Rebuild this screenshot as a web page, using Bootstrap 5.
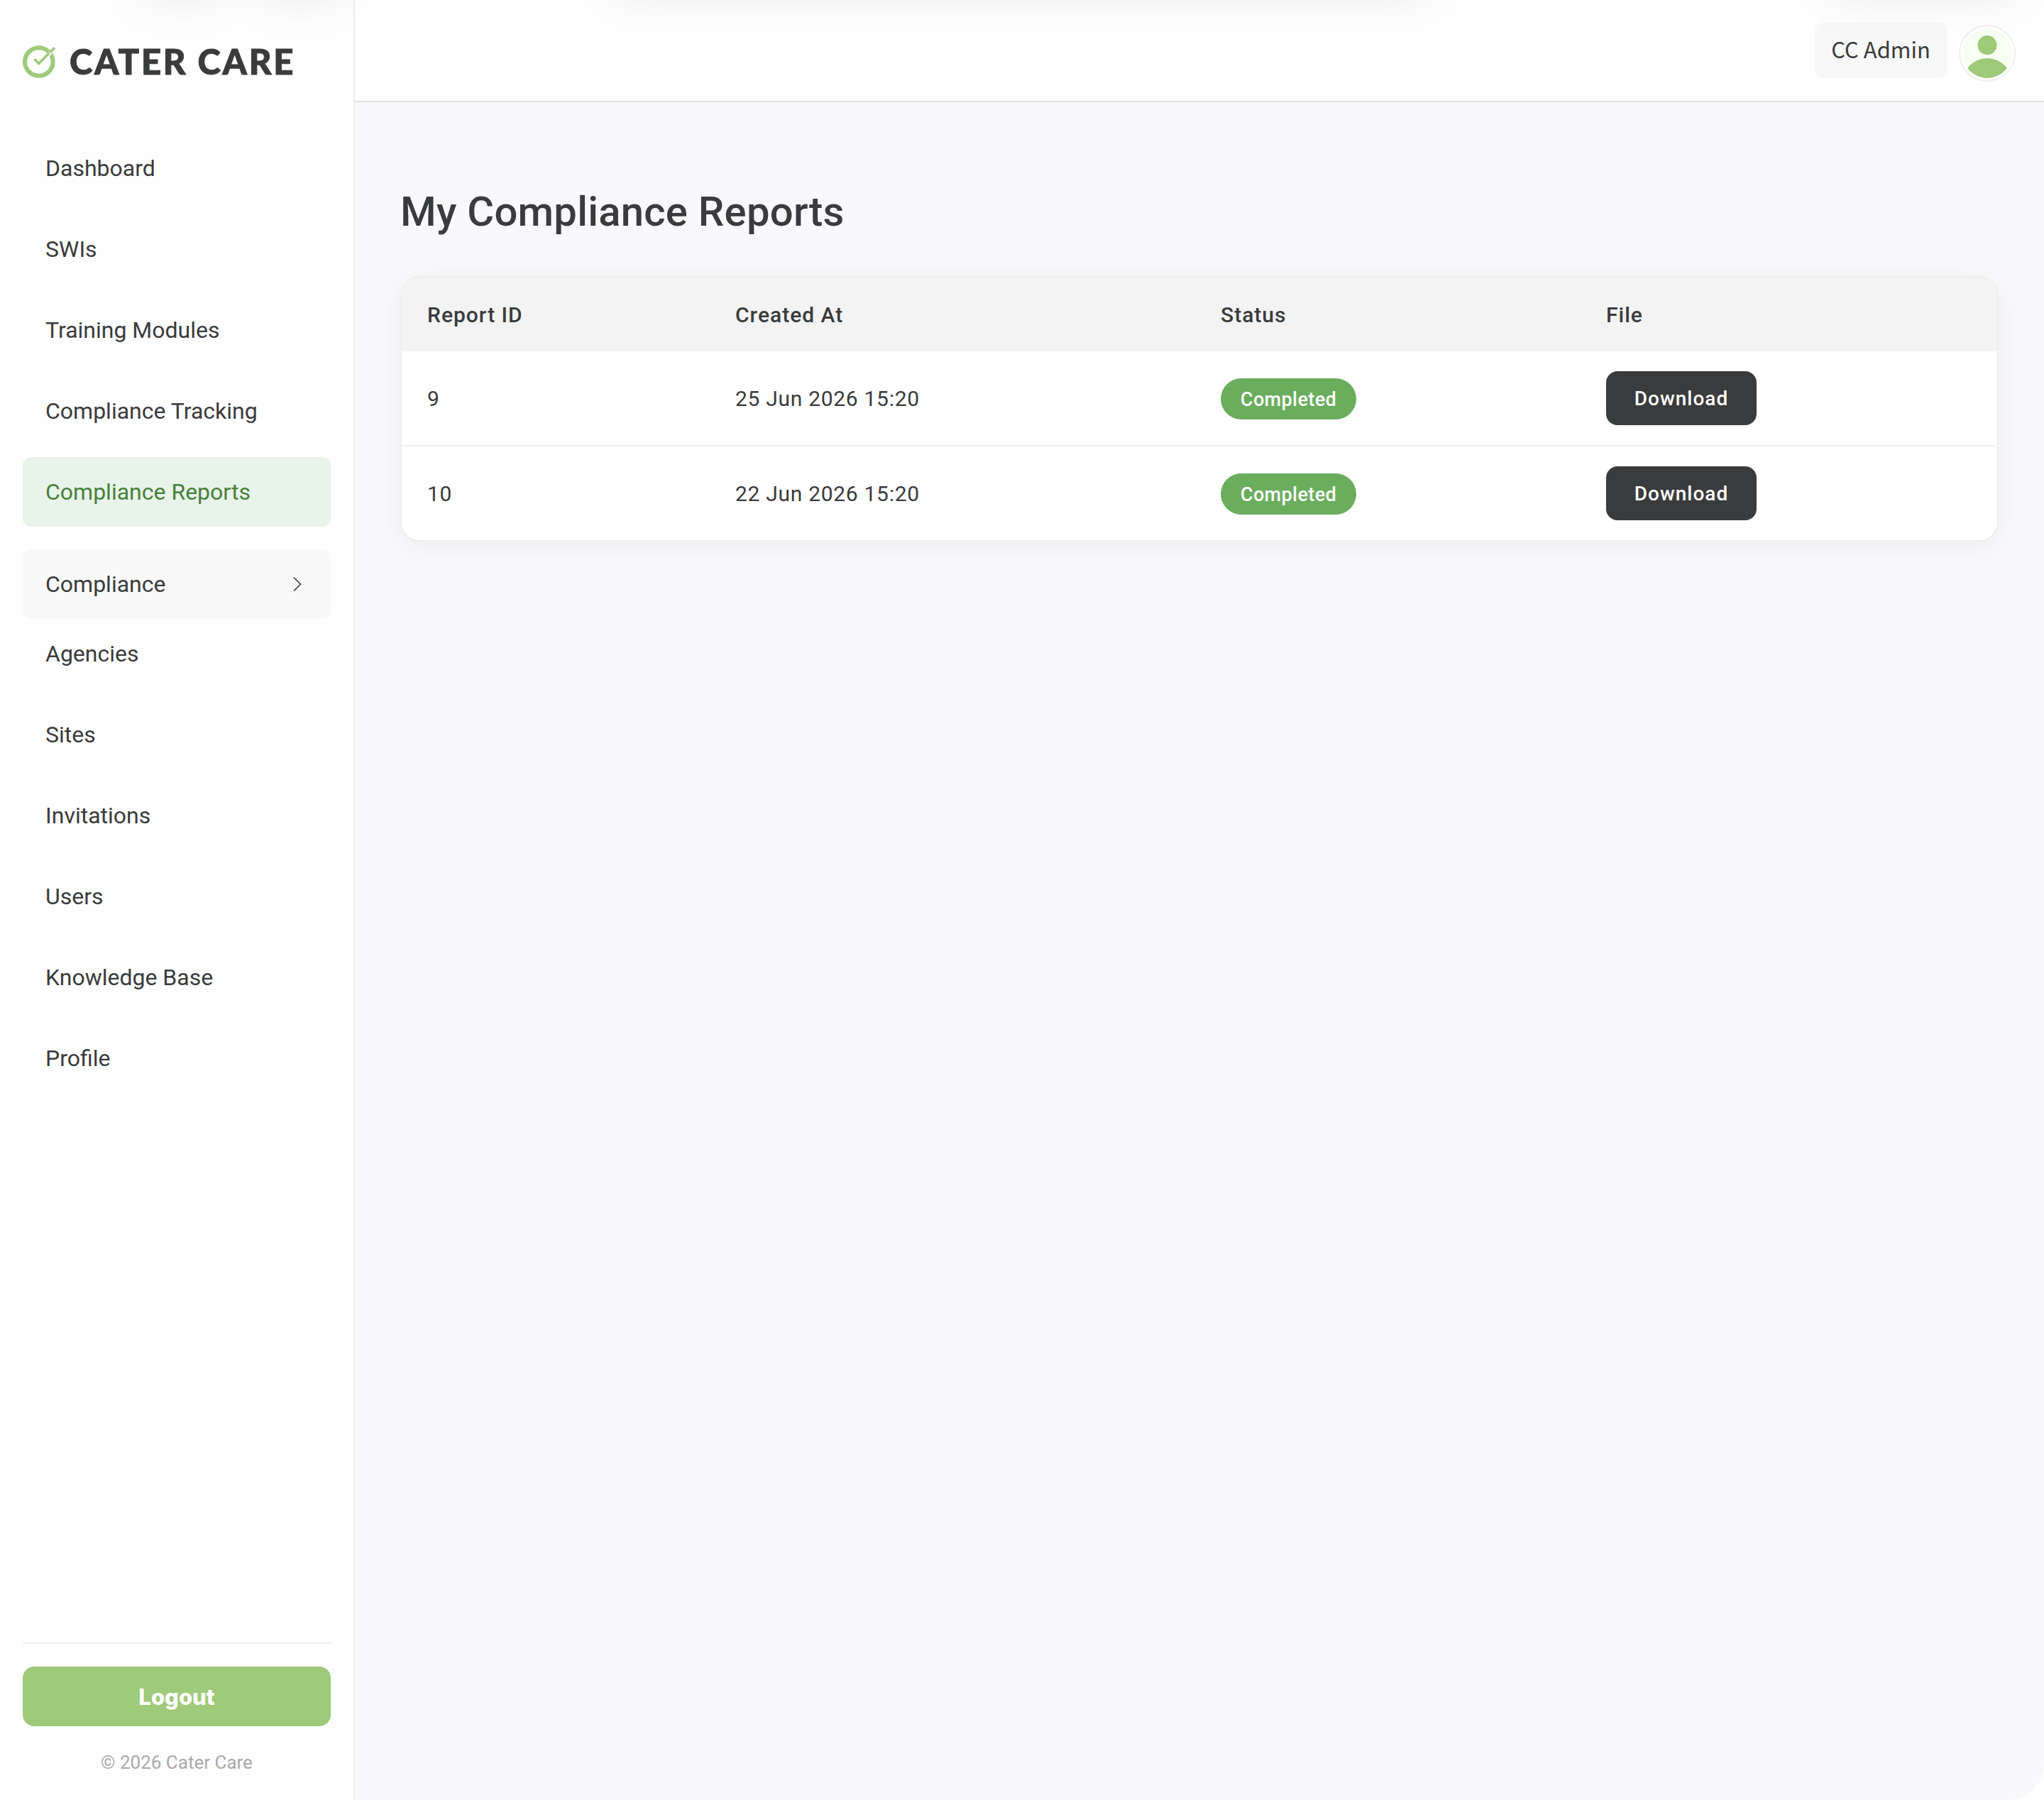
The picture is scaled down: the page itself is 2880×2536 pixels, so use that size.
<!DOCTYPE html>
<html lang="en">
<head>
  <meta charset="UTF-8">
  <meta name="viewport" content="width=device-width, initial-scale=1">
  <title>Cater Care – My Compliance Reports</title>
  <link href="https://cdn.jsdelivr.net/npm/bootstrap@5.3.2/dist/css/bootstrap.min.css" rel="stylesheet">
  <style>
    :root {
      --cc-ink: #3a3b3c;
      --cc-green: #9fca7a;
      --cc-line: #efefef;
    }
    body {
      background-color: #fff;
      color: var(--cc-ink);
      font-family: Roboto, sans-serif;
      font-size: 32px;
      line-height: 1.5;
    }

    /* sidebar */
    .sidebar {
      width: 500px;
      padding: 0 32px 33px;
      background-color: #fefefe;
      border-right: 2px solid var(--cc-line);
    }
    .brand {
      height: 174px;
      padding-bottom: 1px;
      gap: 18px;
      color: var(--cc-ink);
      font: 900 49px/1 Lato, sans-serif;
      letter-spacing: 2.7px;
      -webkit-text-stroke: 1px var(--cc-ink);
    }
    .side-nav {
      margin-top: 14px;
      gap: 16px;
    }
    .side-nav .nav-link {
      height: 98px;
      padding: 0 32px;
      border-radius: 12px;
      color: var(--cc-ink);
    }
    .side-nav .nav-link.active {
      background-color: #e8f3ea;
      color: #47803a;
    }
    .side-nav .nav-group {
      margin: 16px 0 -16px;
      padding-right: 41px;
      background-color: #f9f9f9;
    }
    .side-footer {
      border-top: 2px solid var(--cc-line);
      padding-top: 32px;
    }
    .btn-logout,
    .btn-logout:hover {
      height: 84px;
      border: 0;
      border-radius: 16px;
      background-color: var(--cc-green);
      color: #fff;
      font: 800 31px/1 Inter, sans-serif;
    }
    .copyright {
      margin-top: 32px;
      color: #aaa;
      font-size: 26px;
    }

    /* top bar */
    .topbar {
      height: 144px;
      padding-right: 40px;
      gap: 16px;
      border-bottom: 2px solid #e0e0e0;
    }
    .user-name {
      height: 78px;
      padding: 0 24px 5px 23px;
      border-radius: 12px;
      background-color: #f8f8f8;
      font: 400 31px/1 "Noto Sans CJK SC", sans-serif;
    }
    .avatar {
      width: 80px;
      height: 80px;
      margin-top: 8px;
      padding: 3px;
      border: 2px solid var(--cc-line);
    }

    /* content */
    .content {
      padding: 111px 64px 64px;
      background-color: #f9f9fb;
      border-bottom-right-radius: 50px;
    }
    .page-title {
      height: 134px;
      margin: 0;
      font-size: 58px;
      font-weight: 500;
      line-height: 86px;
      letter-spacing: .25px;
    }
    .report-card {
      border: 2px solid #eee;
      border-radius: 28px;
      box-shadow: 0 8px 40px rgba(0, 0, 0, .05);
      overflow: hidden;
    }
    .report-table {
      table-layout: fixed;
      border-collapse: separate;
      border-spacing: 0;
      font-size: 30px;
      letter-spacing: .7px;
      color: var(--cc-ink);
    }
    .report-table > :not(caption) > * > * {
      height: 132px;
      padding: 0 36px;
      border: 0;
      color: var(--cc-ink);
      background-color: #fff;
    }
    .report-table > thead > tr > th {
      height: 104px;
      background-color: #f3f3f3;
      font-weight: 500;
      letter-spacing: 1px;
      vertical-align: middle;
    }
    .report-table > tbody > tr + tr > td {
      height: 134px;
      border-top: 2px solid var(--cc-line);
    }
    .col-id { width: 434px; }
    .col-created { width: 684px; }
    .col-status { width: 543px; }
    .status-pill {
      height: 58px;
      width: 191px;
      margin-top: 2px;
      padding-top: 2px;
      background-color: #6aad5d;
      color: #fff;
      font-size: 27px;
      font-weight: 500;
      letter-spacing: .4px;
    }
    .btn-download,
    .btn-download:hover {
      width: 212px;
      height: 76px;
      padding: 1px 0 0;
      border: 0;
      border-radius: 16px;
      background-color: #3a3b3c;
      color: #fff;
      font-size: 28px;
      font-weight: 500;
      letter-spacing: 1px;
    }

    /* soft shade falling over the top edge */
    .top-shade {
      height: 90px;
      pointer-events: none;
    }
    .top-shade span {
      position: absolute;
      top: -200px;
      height: 200px;
      box-shadow: 0 0 64px rgba(0, 0, 0, .075);
    }
    .shade-a { left: 197px; width: 122px; }
    .shade-b { left: 358px; width: 130px; }
    .shade-c { left: 856px; width: 1168px; }
    .shade-d { left: 2566px; width: 284px; }
  </style>
</head>
<body>

<div class="d-flex vh-100 position-relative overflow-hidden">

  <aside class="sidebar d-flex flex-column flex-shrink-0">
    <a class="brand d-flex align-items-center text-decoration-none text-nowrap" href="#">
      <svg width="48" height="48" viewBox="0 0 48 48" fill="none" stroke="#9fca7a">
        <circle cx="22.8" cy="24" r="19.8" stroke-width="6.1"/>
        <path d="M32.5 18 41 9.5" stroke="#fefefe" stroke-width="5"/>
        <path d="M16.5 20.2 22.7 26.4 37.2 12M38 11.2 45 4.2" stroke-width="3.6"/>
      </svg>
      <span>CATER CARE</span>
    </a>

    <nav class="side-nav nav flex-column flex-nowrap">
      <a class="nav-link d-flex align-items-center" href="#">Dashboard</a>
      <a class="nav-link d-flex align-items-center" href="#">SWIs</a>
      <a class="nav-link d-flex align-items-center" href="#">Training Modules</a>
      <a class="nav-link d-flex align-items-center" href="#">Compliance Tracking</a>
      <a class="nav-link d-flex align-items-center active" href="#">Compliance Reports</a>
      <a class="nav-link nav-group d-flex align-items-center justify-content-between" href="#">
        Compliance
        <svg width="12" height="20" viewBox="0 0 12 20" fill="none" stroke="#3a3b3c" stroke-width="1.7" stroke-linecap="round" stroke-linejoin="round">
          <path d="M1.5 1 10.5 10 1.5 19"/>
        </svg>
      </a>
      <a class="nav-link d-flex align-items-center" href="#">Agencies</a>
      <a class="nav-link d-flex align-items-center" href="#">Sites</a>
      <a class="nav-link d-flex align-items-center" href="#">Invitations</a>
      <a class="nav-link d-flex align-items-center" href="#">Users</a>
      <a class="nav-link d-flex align-items-center" href="#">Knowledge Base</a>
      <a class="nav-link d-flex align-items-center" href="#">Profile</a>
    </nav>

    <div class="side-footer mt-auto text-center">
      <button class="btn btn-logout w-100" type="button">Logout</button>
      <div class="copyright">© 2026 Cater Care</div>
    </div>
  </aside>

  <div class="d-flex flex-column flex-grow-1">
    <header class="topbar d-flex align-items-center justify-content-end">
      <div class="user-name d-flex align-items-center">CC Admin</div>
      <div class="avatar rounded-circle bg-white">
        <svg class="d-block" width="70" height="70" viewBox="0 0 70 70">
          <clipPath id="face"><circle cx="35" cy="35" r="35"/></clipPath>
          <g clip-path="url(#face)">
            <rect width="70" height="70" fill="#f6fff2"/>
            <circle cx="35" cy="23.6" r="13.6" fill="#9fca7a"/>
            <circle cx="35" cy="77" r="35" fill="#9fca7a"/>
          </g>
        </svg>
      </div>
    </header>

    <main class="content flex-grow-1">
      <h1 class="page-title">My Compliance Reports</h1>

      <div class="report-card bg-white">
        <table class="table report-table align-middle mb-0">
          <thead>
            <tr>
              <th class="col-id">Report ID</th>
              <th class="col-created">Created At</th>
              <th class="col-status">Status</th>
              <th>File</th>
            </tr>
          </thead>
          <tbody>
            <tr>
              <td>9</td>
              <td>25 Jun 2026 15:20</td>
              <td><div class="status-pill rounded-pill d-flex align-items-center justify-content-center">Completed</div></td>
              <td><button class="btn btn-download d-block" type="button">Download</button></td>
            </tr>
            <tr>
              <td>10</td>
              <td>22 Jun 2026 15:20</td>
              <td><div class="status-pill rounded-pill d-flex align-items-center justify-content-center">Completed</div></td>
              <td><button class="btn btn-download d-block" type="button">Download</button></td>
            </tr>
          </tbody>
        </table>
      </div>
    </main>
  </div>

  <div class="top-shade position-absolute top-0 start-0 w-100 overflow-hidden">
    <span class="shade-a"></span>
    <span class="shade-b"></span>
    <span class="shade-c"></span>
    <span class="shade-d"></span>
  </div>
</div>

<script src="https://cdn.jsdelivr.net/npm/bootstrap@5.3.2/dist/js/bootstrap.bundle.min.js"></script>
</body>
</html>
